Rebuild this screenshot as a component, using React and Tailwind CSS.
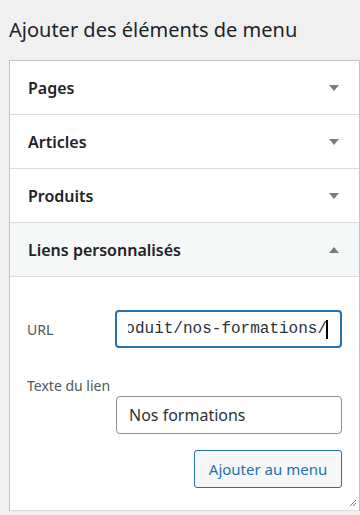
const SANS = "font-['Noto_Sans',sans-serif]";

function Caret({ up }) {
  return (
    <svg width="10" height="6" viewBox="0 0 10 6" className="shrink-0">
      {up ? (
        <path d="M0 6 L5 0 L10 6 Z" fill="#787c82" />
      ) : (
        <path d="M0 0 L10 0 L5 6 Z" fill="#787c82" />
      )}
    </svg>
  );
}

function Section({ title, open = false }) {
  return (
    <div
      className={`h-[54px] flex items-center justify-between pl-[18px] pr-[20px] border-b border-[#dcdcde] ${
        open ? "bg-[#f6f7f7]" : "bg-white"
      }`}
    >
      <span className="text-[16px] font-semibold text-[#1d2327]">{title}</span>
      <Caret up={open} />
    </div>
  );
}

export default function App() {
  return (
    <div className={`w-[360px] h-[515px] overflow-hidden bg-[#f0f0f1] ${SANS}`}>
      <h2 className="pl-[9px] pt-[16px] h-[60px] text-[20px] leading-[28px] text-[#1d2327]">
        Ajouter des éléments de menu
      </h2>

      <div className="ml-[9px] bg-white border-l border-r border-t border-[#c3c4c7]">
        <Section title="Pages" />
        <Section title="Articles" />
        <Section title="Produits" />
        <Section title="Liens personnalisés" open />

        {/* Custom link form */}
        <div className="relative pl-[17px] pr-[17px] pt-[33px] pb-[22px] border-b border-[#dcdcde]">
          <div className="flex items-center">
            <label className="w-[88px] shrink-0 text-[14px] text-[#50575e]">URL</label>
            <div className="flex-1 min-w-0 h-[38px] flex items-center rounded-[4px] border-2 border-[#2271b1] pl-[11px] pr-[12px]">
              <div className="flex-1 min-w-0 flex items-center justify-end overflow-hidden whitespace-nowrap font-['Liberation_Mono',monospace] text-[16px] text-[#2c3338]">
                <span className="shrink-0">produit/nos-formations/</span>
                <span className="shrink-0 w-[2px] h-[19px] bg-black -ml-[1px]" />
              </div>
            </div>
          </div>

          <label className="block mt-[30px] text-[14px] leading-[16px] text-[#50575e]">
            Texte du lien
          </label>
          <div className="mt-[2px] ml-[89px] h-[38px] flex items-center rounded-[4px] border border-[#8c8f94] px-[12px] text-[16px] text-[#2c3338]">
            Nos formations
          </div>

          <div className="flex justify-end mt-[16px]">
            <button className="w-[148px] h-[38px] rounded-[3px] border border-[#2271b1] bg-[#f6f7f7] text-[15px] text-[#2271b1]">
              Ajouter au menu
            </button>
          </div>

          <svg
            width="8"
            height="8"
            viewBox="0 0 8 8"
            className="absolute right-[2px] bottom-[3px]"
          >
            <path d="M1 7 L7 1 M4 7 L7 4" stroke="#787c82" strokeWidth="1" />
          </svg>
        </div>
      </div>
    </div>
  );
}
